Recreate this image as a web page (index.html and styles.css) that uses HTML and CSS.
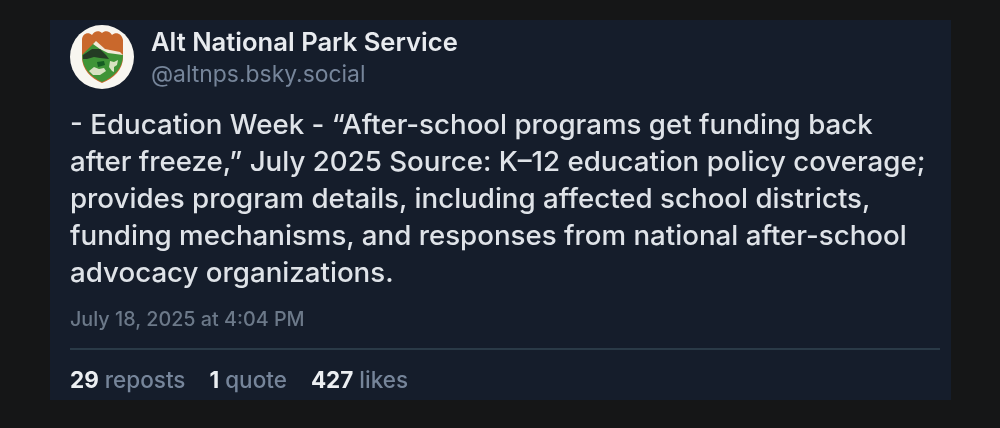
FILE: index.html
```html
<!DOCTYPE html>
<html lang="en">
<head>
<meta charset="utf-8">
<title>Alt National Park Service</title>
<link rel="stylesheet" href="styles.css">
</head>
<body>
<article class="card">
  <header class="author">
    <svg class="avatar" viewBox="0 0 64 64" aria-hidden="true">
      <circle cx="32" cy="32" r="32" fill="#f8f6f0"/>
      <path d="M12 15c0-6 6-9 10-5 2-4 7-5 10-2 3-3 8-2 10 2 4-4 10-1 11 5l0 17c0 13-9 21-21 26-11-5-20-13-20-26z" fill="#c9682c"/>
      <path d="M12 30l13-13 10 8 18 5c0 13-9 22-21 27-11-5-20-14-20-27z" fill="#3f9437"/>
      <path d="M23 19l3-3 9 8 15 3 3 3-15-2-8-4z" fill="#f1ead8"/>
      <path d="M13 30l9-6 8 0 6 6 3 4-9-1-6-1-7 2-4 0z" fill="#243c24"/>
      <path d="M19 46l5-4 5 2 5-1 2 3-6 4-7 0zM39 42l1-6 4 1 4-2-1 5-3 2 0 5-2-1z" fill="#d7e2c2"/>
      <path d="M27 37l7-1 1 4-7 2z" fill="#145c22"/>
    </svg>
    <div class="identity">
      <div class="name">Alt National Park Service</div>
      <div class="handle">@altnps.bsky.social</div>
    </div>
  </header>
  <p class="body">- Education Week - “After-school programs get funding back after freeze,” July 2025 Source: K–12 education policy coverage; provides program details, including affected school districts, funding mechanisms, and responses from national after-school advocacy organizations.</p>
  <time class="date">July 18, 2025 at 4:04 PM</time>
  <hr class="rule">
  <footer class="stats">
    <span><b>29</b> reposts</span>
    <span><b>1</b> quote</span>
    <span><b>427</b> likes</span>
  </footer>
</article>
</body>
</html>
```
FILE: styles.css
```css
* { box-sizing: border-box; }
html, body { height: 100%; }
body {
  margin: 0;
  padding: 20px 49px 28px 50px;
  background: #151617;
  font-family: Inter, "Liberation Sans", sans-serif;
  overflow: hidden;
}
.card {
  height: 380px;
  padding: 5px 11px 0 20px;
  background: #151d2b;
  display: flex;
  flex-direction: column;
  filter: blur(.45px);
}
.author { display: flex; align-items: flex-start; gap: 17px; }
.avatar { width: 64px; height: 64px; flex: none; }
.identity { padding-top: 1px; }
.name { font-size: 25.6px; line-height: 32px; font-weight: 600; color: #e8ebef; }
.handle { font-size: 22.9px; line-height: 32px; color: #76859a; }
.body {
  margin: 16px 0 0;
  font-size: 27.7px;
  font-weight: 500;
  line-height: 37px;
  color: #dfe3e8;
}
.date { margin-top: 15px; font-size: 19.75px; font-weight: 500; line-height: 26px; color: #6c7989; }
.rule { width: 100%; height: 2px; margin: 16px 0 0; border: 0; background: #2a3a47; }
.stats { display: flex; gap: 24px; margin-top: 15px; font-size: 22.5px; font-weight: 500; line-height: 30px; color: #76859a; }
.stats b { font-weight: 700; color: #eceff2; }
```
